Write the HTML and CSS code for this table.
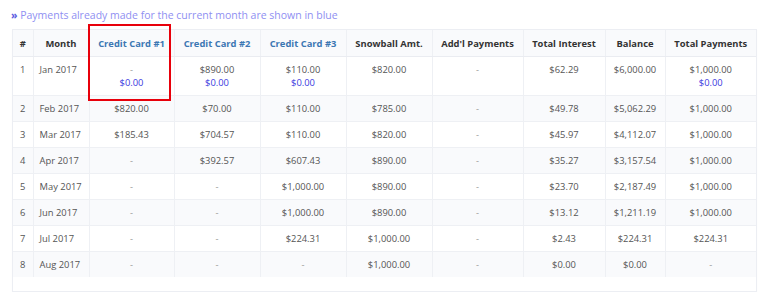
FILE: index.html
```html
<!DOCTYPE html>
<html>
<head>
<meta charset="utf-8">
<link rel="stylesheet" href="styles.css">
</head>
<body>
<p class="note"><span class="raquo">»</span> Payments already made for the current month are shown in blue</p>
<div class="panel">
  <div class="frame">
    <table class="grid">
      <colgroup>
        <col class="c-num"><col class="c-month"><col class="c-cc"><col class="c-cc2"><col class="c-cc2">
        <col class="c-snow"><col class="c-add"><col class="c-int"><col class="c-bal"><col class="c-tot">
      </colgroup>
      <thead>
        <tr>
          <th>#</th><th>Month</th><th class="card">Credit Card #1</th><th class="card">Credit Card #2</th><th class="card">Credit Card #3</th>
          <th>Snowball Amt.</th><th>Add'l Payments</th><th>Total Interest</th><th>Balance</th><th>Total Payments</th>
        </tr>
      </thead>
      <tbody>
        <tr>
          <td>1</td><td class="month">Jan 2017</td>
          <td><span class="dash">-</span><br><span class="paid">$0.00</span></td>
          <td>$890.00<br><span class="paid">$0.00</span></td>
          <td>$110.00<br><span class="paid">$0.00</span></td>
          <td>$820.00</td><td class="dash">-</td><td>$62.29</td><td>$6,000.00</td>
          <td>$1,000.00<br><span class="paid">$0.00</span></td>
        </tr>
        <tr><td>2</td><td class="month">Feb 2017</td><td>$820.00</td><td>$70.00</td><td>$110.00</td><td>$785.00</td><td class="dash">-</td><td>$49.78</td><td>$5,062.29</td><td>$1,000.00</td></tr>
        <tr><td>3</td><td class="month">Mar 2017</td><td>$185.43</td><td>$704.57</td><td>$110.00</td><td>$820.00</td><td class="dash">-</td><td>$45.97</td><td>$4,112.07</td><td>$1,000.00</td></tr>
        <tr><td>4</td><td class="month">Apr 2017</td><td class="dash">-</td><td>$392.57</td><td>$607.43</td><td>$890.00</td><td class="dash">-</td><td>$35.27</td><td>$3,157.54</td><td>$1,000.00</td></tr>
        <tr><td>5</td><td class="month">May 2017</td><td class="dash">-</td><td class="dash">-</td><td>$1,000.00</td><td>$890.00</td><td class="dash">-</td><td>$23.70</td><td>$2,187.49</td><td>$1,000.00</td></tr>
        <tr><td>6</td><td class="month">Jun 2017</td><td class="dash">-</td><td class="dash">-</td><td>$1,000.00</td><td>$890.00</td><td class="dash">-</td><td>$13.12</td><td>$1,211.19</td><td>$1,000.00</td></tr>
        <tr><td>7</td><td class="month">Jul 2017</td><td class="dash">-</td><td class="dash">-</td><td>$224.31</td><td>$1,000.00</td><td class="dash">-</td><td>$2.43</td><td>$224.31</td><td>$224.31</td></tr>
        <tr><td>8</td><td class="month">Aug 2017</td><td class="dash">-</td><td class="dash">-</td><td class="dash">-</td><td>$1,000.00</td><td class="dash">-</td><td>$0.00</td><td>$0.00</td><td class="dash">-</td></tr>
      </tbody>
    </table>
    <div class="highlight"></div>
  </div>
</div>
</body>
</html>
```
FILE: styles.css
```css
html, body {
  margin: 0;
  padding: 0;
  background: #ffffff;
}
body {
  font-family: "Open Sans", "Liberation Sans", sans-serif;
  color: #555;
}
.note {
  margin: 0;
  padding: 7px 0 0 11px;
  height: 22px;
  font-size: 10.5px;
  line-height: 16px;
  color: #8f8ff2;
}
.raquo {
  color: #5a5ae0;
  font-weight: 700;
}
.panel {
  margin: 0 11px 0 12px;
  border: 1px solid #eceef3;
  padding-bottom: 14px;
  width: 743px;
  box-shadow: 0 1px 1px rgba(0,0,0,0.03);
}
.frame {
  position: relative;
}
.grid {
  width: 743px;
  border-collapse: collapse;
  table-layout: fixed;
  font-size: 9.4px;
  line-height: 13px;
}
.c-num { width: 20px; }
.c-month { width: 56px; }
.c-cc { width: 85px; }
.c-cc2 { width: 86px; }
.c-snow { width: 86px; }
.c-add { width: 91px; }
.c-int { width: 82px; }
.c-bal { width: 60px; }
.c-tot { width: 91px; }
th, td {
  text-align: center;
  vertical-align: top;
  border-left: 1px solid #eef0f4;
  border-top: 1px solid #eef0f4;
  white-space: nowrap;
  overflow: hidden;
}
th:first-child, td:first-child {
  border-left: none;
}
th {
  padding: 7px 2px 6px;
  font-weight: 700;
  color: #333;
  background: #f9fafc;
  border-top: none;
  border-bottom: 1px solid #eaecf1;
}
th.card {
  color: #3c77b3;
}
td {
  padding: 6px 2px 6px;
  color: #555;
}
tbody tr:nth-child(even) td {
  background: #f9fafc;
}
td.month {
  text-align: left;
  padding-left: 6px;
}
.dash {
  color: #999;
}
.paid {
  color: #3b3be0;
}
.highlight {
  position: absolute;
  left: 75px;
  top: -6px;
  width: 79px;
  height: 73px;
  border: 2px solid #e8000b;
}
```
